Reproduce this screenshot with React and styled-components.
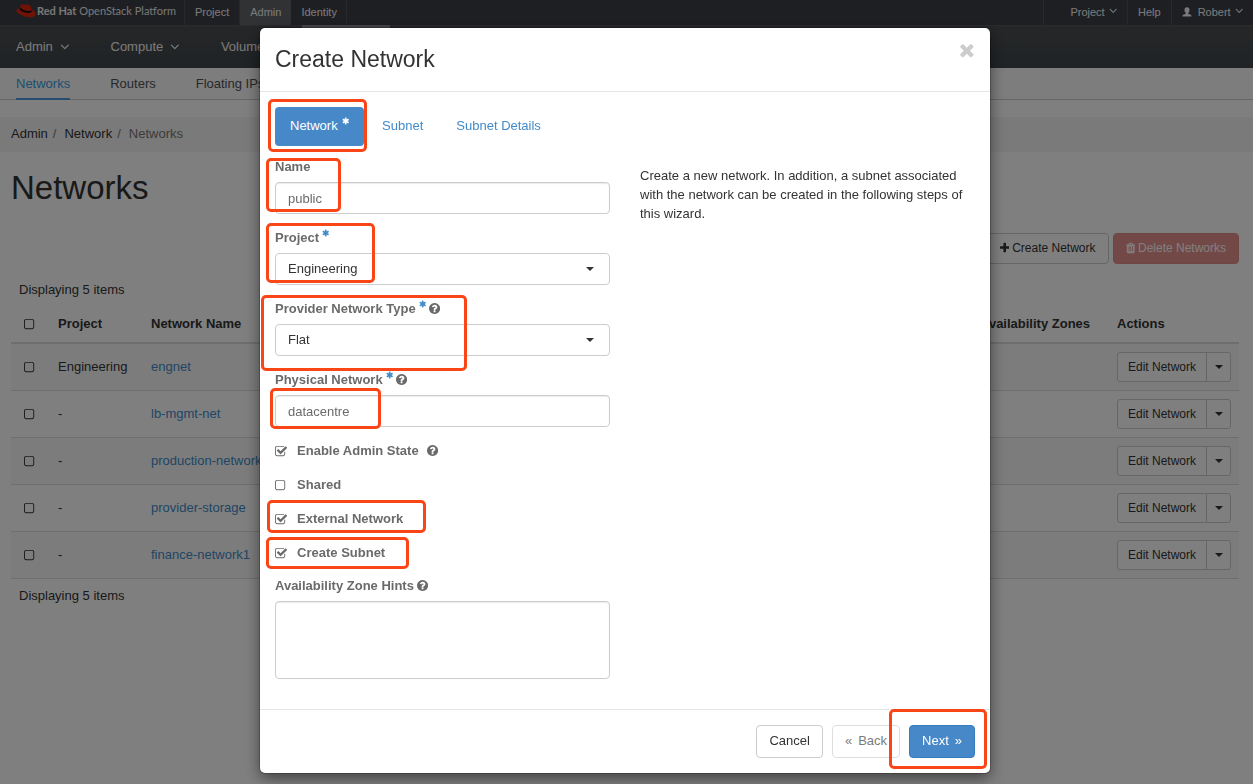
import React, { useState } from "react";
import styled, { createGlobalStyle, css } from "styled-components";

const GLYPHS = {
  check: {
    width: 1664,
    path: "M1408 606v-318q0 -119 -84.5 -203.5t-203.5 -84.5h-832q-119 0 -203.5 84.5t-84.5 203.5v832q0 119 84.5 203.5t203.5 84.5h832q63 0 117 -25q15 -7 18 -23q3 -17 -9 -29l-49 -49q-10 -10 -23 -10q-3 0 -9 2q-23 6 -45 6h-832q-66 0 -113 -47t-47 -113v-832q0 -66 47 -113t113 -47h832q66 0 113 47t47 113v254q0 13 9 22l64 64q10 10 23 10q6 0 12 -3q20 -8 20 -29zM1639 1095l-814 -814q-24 -24 -57 -24t-57 24l-430 430q-24 24 -24 57t24 57l110 110q24 24 57 24t57 -24l263 -263l647 647q24 24 57 24t57 -24l110 -110q24 -24 24 -57t-24 -57z",
  },
  square: {
    width: 1664,
    path: "M1120 1280h-832q-66 0 -113 -47t-47 -113v-832q0 -66 47 -113t113 -47h832q66 0 113 47t47 113v832q0 66 -47 113t-113 47zM1408 1120v-832q0 -119 -84.5 -203.5t-203.5 -84.5h-832q-119 0 -203.5 84.5t-84.5 203.5v832q0 119 84.5 203.5t203.5 84.5h832q119 0 203.5 -84.5t84.5 -203.5z",
  },
  help: {
    width: 1536,
    path: "M896 160v192q0 14 -9 23t-23 9h-192q-14 0 -23 -9t-9 -23v-192q0 -14 9 -23t23 -9h192q14 0 23 9t9 23zM1152 832q0 88 -55.5 163t-138.5 116t-170 41q-243 0 -371 -213q-15 -24 8 -42l132 -100q7 -6 19 -6q16 0 25 12q53 68 86 92q34 24 86 24q48 0 85.5 -26t37.5 -59q0 -38 -20 -61t-68 -45q-63 -28 -115.5 -86.5t-52.5 -125.5v-36q0 -14 9 -23t23 -9h192q14 0 23 9t9 23q0 19 21.5 49.5t54.5 49.5q32 18 49 28.5t46 35t44.5 48t28 60.5t12.5 81zM1536 640q0 -209 -103 -385.5t-279.5 -279.5t-385.5 -103t-385.5 103t-279.5 279.5t-103 385.5t103 385.5t279.5 279.5t385.5 103t385.5 -103t279.5 -279.5t103 -385.5z",
  },
  times: {
    width: 1408,
    path: "M1298 214q0 -40 -28 -68l-136 -136q-28 -28 -68 -28t-68 28l-294 294l-294 -294q-28 -28 -68 -28t-68 28l-136 136q-28 28 -28 68t28 68l294 294l-294 294q-28 28 -28 68t28 68l136 136q28 28 68 28t68 -28l294 -294l294 294q28 28 68 28t68 -28l136 -136q28 -28 28 -68t-28 -68l-294 -294l294 -294q28 -28 28 -68z",
  },
  asterisk: {
    width: 1664,
    path: "M1482 486q46 -26 59.5 -77.5t-12.5 -97.5l-64 -110q-26 -46 -77.5 -59.5t-97.5 12.5l-266 153v-307q0 -52 -38 -90t-90 -38h-128q-52 0 -90 38t-38 90v307l-266 -153q-46 -26 -97.5 -12.5t-77.5 59.5l-64 110q-26 46 -12.5 97.5t59.5 77.5l266 154l-266 154q-46 26 -59.5 77.5t12.5 97.5l64 110q26 46 77.5 59.5t97.5 -12.5l266 -153v307q0 52 38 90t90 38h128q52 0 90 -38t38 -90v-307l266 153q46 26 97.5 12.5t77.5 -59.5l64 -110q26 -46 12.5 -97.5t-59.5 -77.5l-266 -154z",
  },
  plus: {
    width: 1408,
    path: "M1408 800v-192q0 -40 -28 -68t-68 -28h-416v-416q0 -40 -28 -68t-68 -28h-192q-40 0 -68 28t-28 68v416h-416q-40 0 -68 28t-28 68v192q0 40 28 68t68 28h416v416q0 40 28 68t68 28h192q40 0 68 -28t28 -68v-416h416q40 0 68 -28t28 -68z",
  },
  trash: {
    width: 1408,
    path: "M512 160v704q0 14 -9 23t-23 9h-64q-14 0 -23 -9t-9 -23v-704q0 -14 9 -23t23 -9h64q14 0 23 9t9 23zM768 160v704q0 14 -9 23t-23 9h-64q-14 0 -23 -9t-9 -23v-704q0 -14 9 -23t23 -9h64q14 0 23 9t9 23zM1024 160v704q0 14 -9 23t-23 9h-64q-14 0 -23 -9t-9 -23v-704q0 -14 9 -23t23 -9h64q14 0 23 9t9 23zM480 1152h448l-48 117q-7 9 -17 11h-317q-10 -2 -17 -11zM1408 1120v-64q0 -14 -9 -23t-23 -9h-96v-948q0 -83 -47 -143.5t-113 -60.5h-832q-66 0 -113 58.5t-47 141.5v952h-96q-14 0 -23 9t-9 23v64q0 14 9 23t23 9h309l70 167q15 37 54 63t79 26h320q40 0 79 -26t54 -63l70 -167h309q14 0 23 -9t9 -23z",
  },
  angle: {
    width: 1152,
    path: "M1075 800q0 -13 -10 -23l-466 -466q-10 -10 -23 -10t-23 10l-466 466q-10 10 -10 23t10 23l50 50q10 10 23 10t23 -10l393 -393l393 393q10 10 23 10t23 -10l50 -50q10 -10 10 -23z",
  },
};

const Icon = ({ name, size = 13 }) => {
  const glyph = GLYPHS[name];
  return (
    <Glyph
      viewBox={`0 -1536 ${glyph.width} 1792`}
      width={(size * glyph.width) / 1792}
      height={size}
      $raised={name === "help" || name === "angle"}
      aria-hidden="true"
    >
      <path d={glyph.path} transform="scale(1 -1)" />
    </Glyph>
  );
};

const Caret = () => (
  <Glyph viewBox="0 0 8 4" width="8" height="4" aria-hidden="true">
    <path d="M0 0h8L4 4z" />
  </Glyph>
);

const Hat = () => (
  <Glyph viewBox="0 0 20 14" width="20" height="14" aria-hidden="true">
    <path
      fill="#e0260c"
      d="M4.6 1.6C5 .5 6.200 0 7.400.4c1 .3 1.700.5 2.500.2 1.300-.5 3.300-.1 4.100 1 .7 1 1.400 2.900 1.700 4.400 2.300.7 4 2.100 4 3.900 0 2.500-3 3.800-6.800 3.400C8 12.800.4 9.500.4 6.500.4 5 1.900 4.600 3.800 4.700z"
    />
    <path
      fill="#111"
      d="M3.800 4.700l.4-1.500c1.200 2.600 8.400 5.100 11.200 3.300l.3-.5.200 1.200c-.4 1.500-2.500 1.900-4.900 1.600C7.500 8.400 3.600 6.600 3.800 4.700z"
    />
  </Glyph>
);

const UserIcon = () => (
  <Glyph viewBox="0 0 10 10" width="10" height="10" aria-hidden="true">
    <path d="M5 .2c1.700 0 2.500 1.100 2.500 2.700 0 1.300-.6 2.300-1.200 2.900v1.100c1.600.3 3.200.7 3.200 1.900v.8h-9v-.8c0-1.200 1.600-1.600 3.200-1.900V5.800C3.100 5.200 2.500 4.200 2.500 2.900 2.500 1.300 3.300.2 5 .2z" />
  </Glyph>
);

const CheckBox = ({ label, children, defaultChecked = false }) => {
  const [checked, setChecked] = useState(defaultChecked);
  return (
    <CheckLabel>
      <HiddenCheck
        type="checkbox"
        aria-label={label}
        checked={checked}
        onChange={(e) => setChecked(e.target.checked)}
      />
      <Icon name={checked ? "check" : "square"} />
      {children && <span>{children}</span>}
    </CheckLabel>
  );
};

const Required = () => (
  <Star>
    <Icon name="asterisk" size={8} />
  </Star>
);

const FieldLabel = ({ htmlFor, required, help, children }) => (
  <LabelRow>
    <label htmlFor={htmlFor}>{children}</label>
    {required && <Required />}
    {help && <Icon name="help" />}
  </LabelRow>
);

const networks = [
  { project: "Engineering", name: "engnet" },
  { project: "-", name: "lb-mgmt-net" },
  { project: "-", name: "production-network" },
  { project: "-", name: "provider-storage" },
  { project: "-", name: "finance-network1" },
];

// highlight boxes, measured from the corner of the dialog
const highlights = [
  { x: 8, y: 71, w: 99, h: 53 },
  { x: 6, y: 130, w: 75, h: 54 },
  { x: 6, y: 195, w: 109, h: 60 },
  { x: 1, y: 267, w: 206, h: 76 },
  { x: 10, y: 360, w: 111, h: 41 },
  { x: 7, y: 472, w: 159, h: 33 },
  { x: 6, y: 509, w: 143, h: 32 },
  { x: 629, y: 681, w: 98, h: 60 },
];

const TopNav = () => (
  <TopBar>
    <Brand href="#">
      <Hat />
      <BrandText>
        <b>Red Hat</b> OpenStack Platform
      </BrandText>
    </Brand>
    <TopLink href="#">Project</TopLink>
    <TopLink href="#" $active>
      Admin
    </TopLink>
    <TopLink href="#" $end>
      Identity
      <Submenu />
    </TopLink>
    <Spacer />
    <TopLink href="#" $wide>
      Project <Icon name="angle" />
    </TopLink>
    <TopLink href="#">Help</TopLink>
    <TopLink href="#">
      <UserIcon />
      <UserName>Robert</UserName>
      <Icon name="angle" />
    </TopLink>
  </TopBar>
);

const NetworksPage = () => (
  <Page>
    <TopNav />
    <MainNav>
      <a href="#">
        Admin <Icon name="angle" size={15} />
      </a>
      <a href="#">
        Compute <Icon name="angle" size={15} />
      </a>
      <a href="#">
        Volume <Icon name="angle" size={15} />
      </a>
    </MainNav>
    <SubNav>
      <SubLink href="#" $active>
        Networks
      </SubLink>
      <SubLink href="#">Routers</SubLink>
      <SubLink href="#">Floating IPs</SubLink>
    </SubNav>
    <Breadcrumb>
      <a href="#">Admin</a>
      <i>/</i>
      <a href="#">Network</a>
      <i>/</i>
      <span>Networks</span>
    </Breadcrumb>
    <Content>
      <Heading>Networks</Heading>
      <Actions>
        <Button type="button" $small>
          <Icon name="plus" size={12} />
          Create Network
        </Button>
        <Button type="button" $small $kind="danger">
          <Icon name="trash" size={12} />
          Delete Networks
        </Button>
      </Actions>
      <Count>Displaying 5 items</Count>
      <Table>
        <colgroup>
          <CheckCol />
          <ProjectCol />
          <col />
          <ZoneCol />
          <ActionCol />
        </colgroup>
        <thead>
          <tr>
            <th>
              <CheckBox label="Select all networks" />
            </th>
            <th>Project</th>
            <th>Network Name</th>
            <th>Availability Zones</th>
            <th>Actions</th>
          </tr>
        </thead>
        <tbody>
          {networks.map((network) => (
            <tr key={network.name}>
              <td>
                <CheckBox label={`Select ${network.name}`} />
              </td>
              <td>{network.project}</td>
              <td>
                <a href="#">{network.name}</a>
              </td>
              <td />
              <td>
                <ButtonGroup>
                  <EditButton type="button">Edit Network</EditButton>
                  <MoreButton type="button" aria-label="More actions">
                    <Caret />
                  </MoreButton>
                </ButtonGroup>
              </td>
            </tr>
          ))}
        </tbody>
      </Table>
      <Count>Displaying 5 items</Count>
    </Content>
  </Page>
);

const CreateNetworkDialog = () => (
  <Dialog role="dialog" aria-labelledby="dialog-title">
    <DialogHeader>
      <DialogTitle id="dialog-title">Create Network</DialogTitle>
      <CloseButton type="button" aria-label="Close">
        <Icon name="times" size={20} />
      </CloseButton>
    </DialogHeader>
    <DialogBody>
      <Tabs>
        <Tab href="#" $active>
          Network <Required />
        </Tab>
        <Tab href="#">Subnet</Tab>
        <Tab href="#">Subnet Details</Tab>
      </Tabs>
      <Columns>
        <Form>
          <Field>
            <FieldLabel htmlFor="name">Name</FieldLabel>
            <Input id="name" type="text" defaultValue="public" />
          </Field>
          <Field>
            <FieldLabel htmlFor="project" required>
              Project
            </FieldLabel>
            <SelectBox>
              <Select id="project">
                <option>Engineering</option>
              </Select>
              <Caret />
            </SelectBox>
          </Field>
          <Field>
            <FieldLabel htmlFor="type" required help>
              Provider Network Type
            </FieldLabel>
            <SelectBox>
              <Select id="type">
                <option>Flat</option>
              </Select>
              <Caret />
            </SelectBox>
          </Field>
          <Field>
            <FieldLabel htmlFor="physical" required help>
              Physical Network
            </FieldLabel>
            <Input id="physical" type="text" defaultValue="datacentre" />
          </Field>
          <Checks>
            <CheckRow>
              <CheckBox defaultChecked>Enable Admin State</CheckBox>
              <Icon name="help" />
            </CheckRow>
            <CheckRow>
              <CheckBox>Shared</CheckBox>
            </CheckRow>
            <CheckRow>
              <CheckBox defaultChecked>External Network</CheckBox>
            </CheckRow>
            <CheckRow>
              <CheckBox defaultChecked>Create Subnet</CheckBox>
            </CheckRow>
          </Checks>
          <Field>
            <FieldLabel htmlFor="hints" help>
              Availability Zone Hints
            </FieldLabel>
            <TextArea id="hints" />
          </Field>
        </Form>
        <Help>
          Create a new network. In addition, a subnet associated with the network can be created in
          the following steps of this wizard.
        </Help>
      </Columns>
    </DialogBody>
    <DialogFooter>
      <Button type="button">Cancel</Button>
      <Button type="button" disabled>
        <span>«</span>Back
      </Button>
      <Button type="button" $kind="primary">
        Next<span>»</span>
      </Button>
    </DialogFooter>
    {highlights.map((box) => (
      <Highlight key={box.y} $box={box} />
    ))}
  </Dialog>
);

const App = () => (
  <>
    <GlobalStyle />
    <NetworksPage />
    <Backdrop>
      <CreateNetworkDialog />
    </Backdrop>
  </>
);

const GlobalStyle = createGlobalStyle`
  * {
    box-sizing: border-box;
  }

  body {
    margin: 0;
    background: #fff;
    color: #333;
    font: 13px/18px "Liberation Sans", Arial, sans-serif;
  }

  a {
    color: #428bca;
    text-decoration: none;
  }

  button, input, select, textarea {
    font: inherit;
  }
`;

const Glyph = styled.svg`
  display: block;
  flex: none;
  margin-bottom: ${(p) => (p.$raised ? 2 : 0)}px;
  fill: currentColor;
`;

const Page = styled.div`
  min-height: 100vh;
`;

const TopBar = styled.nav`
  display: flex;
  height: 26px;
  background: #3c3f45;
  border-bottom: 1px solid #55575a;
`;

const Brand = styled.a`
  display: flex;
  align-items: center;
  gap: 1px;
  width: 184px;
  padding: 0 0 3px 16px;
  color: #eee;
`;

const BrandText = styled.span`
  font-family: Lato, sans-serif;
  font-size: 11px;
  white-space: nowrap;
`;

const TopLink = styled.a`
  position: relative;
  display: flex;
  align-items: center;
  gap: 4px;
  padding: 0 ${(p) => (p.$end ? 9 : 10)}px 2px ${(p) => (p.$wide ? 26 : 10)}px;
  border-left: 1px solid #505257;
  color: #f5f5f5;
  font-size: 11px;

  ${(p) =>
    p.$active &&
    css`
      background: #626469;
    `}

  ${(p) =>
    p.$end &&
    css`
      border-left: 0;
      border-right: 1px solid #505257;
    `}
`;

const Submenu = styled.span`
  position: absolute;
  top: 25px;
  left: 11px;
  width: 88px;
  height: 40px;
  background: #8c8d90;
`;

const UserName = styled.span`
  margin-left: 2px;
`;

const Spacer = styled.div`
  flex: 1;
`;

const MainNav = styled.nav`
  display: flex;
  align-items: center;
  gap: 41px;
  height: 42px;
  padding: 0 16px;
  background: linear-gradient(#4c4e51, #3f474b);

  a {
    display: flex;
    align-items: center;
    gap: 7px;
    color: #f5f5f5;
  }
`;

const SubNav = styled.nav`
  display: flex;
  gap: 40px;
  height: 32px;
  padding: 0 16px;
  background: #fafafa;
  border-bottom: 1px solid #ccc;
`;

const SubLink = styled.a`
  height: 32px;
  padding-top: 7px;
  color: ${(p) => (p.$active ? "#39a0e0" : "#4d5258")};
  border-bottom: 2px solid ${(p) => (p.$active ? "#4c9ada" : "transparent")};
`;

const Breadcrumb = styled.nav`
  display: flex;
  align-items: center;
  height: 35px;
  margin-top: 17px;
  padding: 0 11px 2px;
  background: #f5f5f5;
  color: #777;

  a {
    color: #333;
  }

  i {
    padding: 0 8px 0 5px;
    font-style: normal;
  }
`;

const Content = styled.main`
  padding: 18px 14px 0 11px;
`;

const Heading = styled.h1`
  margin: 0 0 27px;
  font-size: 33px;
  font-weight: 400;
  line-height: 36px;
`;

const Actions = styled.div`
  display: flex;
  justify-content: flex-end;
  gap: 4px;
  margin-bottom: 9px;
`;

const Button = styled.button`
  display: flex;
  align-items: center;
  gap: ${(p) => (p.$small ? 3 : 6)}px;
  height: ${(p) => (p.$small ? 31 : 33)}px;
  padding: 0 12px 2px;
  border: 1px solid #ccc;
  border-radius: 4px;
  background: #fff;
  color: #333;
  font-size: ${(p) => (p.$small ? 12 : 13)}px;

  &:disabled {
    opacity: 0.65;
  }

  ${(p) =>
    p.$kind === "primary" &&
    css`
      background: #4788c8;
      border-color: #357ebd;
      color: #fff;
    `}

  ${(p) =>
    p.$kind === "danger" &&
    css`
      background: #e69290;
      border-color: #e08b88;
      color: #fff;
    `}
`;

const Count = styled.div`
  padding: 8px;
`;

const Table = styled.table`
  width: 100%;
  table-layout: fixed;
  border-collapse: separate;
  border-spacing: 0;

  th,
  td {
    padding: 0 8px;
    text-align: left;
    border-bottom: 1px solid #ddd;
  }

  th {
    padding: 8px 8px 9px;
    border-bottom-width: 2px;
  }

  td {
    height: 47px;
  }

  th:first-child,
  td:first-child {
    padding-left: 13px;
  }

  tbody tr:nth-child(odd) {
    background: #f9f9f9;
  }
`;

const CheckCol = styled.col`
  width: 39px;
`;

const ProjectCol = styled.col`
  width: 93px;
`;

const ZoneCol = styled.col`
  width: 137px;
`;

const ActionCol = styled.col`
  width: 130px;
`;

const ButtonGroup = styled.div`
  display: flex;
`;

const EditButton = styled.button`
  width: 90px;
  height: 30px;
  padding: 0;
  border: 1px solid #ccc;
  border-radius: 3px 0 0 3px;
  background: #fff;
  color: #333;
  font-size: 12px;
`;

const MoreButton = styled.button`
  display: flex;
  align-items: center;
  justify-content: center;
  width: 25px;
  height: 30px;
  margin-left: -1px;
  padding: 0;
  border: 1px solid #ccc;
  border-radius: 0 3px 3px 0;
  background: #fff;
  color: #333;
`;

const CheckLabel = styled.label`
  position: relative;
  display: flex;
  align-items: center;
  gap: 10px;
`;

const HiddenCheck = styled.input`
  position: absolute;
  width: 12px;
  height: 12px;
  margin: 0;
  opacity: 0;
`;

const Backdrop = styled.div`
  position: fixed;
  inset: 0;
  overflow: auto;
  padding: 28px 3px 11px 0;
  background: rgba(0, 0, 0, 0.5);
`;

const Dialog = styled.section`
  position: relative;
  width: 730px;
  max-width: 100%;
  margin: 0 auto;
  border-radius: 5px;
  background: #fff;
  box-shadow: 0 0 0 1px rgba(0, 0, 0, 0.2), 0 5px 15px rgba(0, 0, 0, 0.5);
`;

const DialogHeader = styled.header`
  display: flex;
  justify-content: space-between;
  padding: 15px;
  border-bottom: 1px solid #e5e5e5;
`;

const DialogTitle = styled.h2`
  margin: 0;
  font-size: 23px;
  font-weight: 400;
  line-height: 33px;
`;

const CloseButton = styled.button`
  display: flex;
  align-items: center;
  height: 14px;
  padding: 0;
  border: 0;
  background: none;
  color: #ccc;
`;

const DialogBody = styled.div`
  padding: 15px;
`;

const Tabs = styled.nav`
  display: flex;
  gap: 3px;
  margin-bottom: 12px;
`;

const Tab = styled.a`
  display: flex;
  align-items: center;
  height: 39px;
  padding: 0 15px 2px;
  border-radius: 4px;

  ${(p) =>
    p.$active &&
    css`
      background: #4788c8;
      color: #fff;

      span {
        color: #fff;
      }
    `}
`;

const Columns = styled.div`
  display: grid;
  grid-template-columns: 1fr 1fr;
  gap: 30px;
`;

const Form = styled.form`
  display: grid;
  gap: 15px;
  padding-bottom: 15px;
`;

const Field = styled.div`
  display: grid;
  gap: 6px;
`;

const LabelRow = styled.div`
  display: flex;
  align-items: center;
  gap: 3px;
  height: 18px;
  color: #6a6a6a;
  font-weight: 700;
`;

const Star = styled.span`
  height: 18px;
  color: #428bca;

  ${Tab} & {
    margin-left: 4px;
  }
`;

const control = css`
  width: 100%;
  border: 1px solid #ccc;
  border-radius: 4px;
  background: #fff;
`;

const Input = styled.input`
  ${control}
  height: 32px;
  padding: 1px 12px 0;
  color: #6a6a6a;
  box-shadow: inset 0 1px 1px rgba(0, 0, 0, 0.08);
`;

const SelectBox = styled.div`
  display: grid;
  align-items: center;

  > * {
    grid-area: 1 / 1;
  }

  svg {
    justify-self: end;
    margin-right: 16px;
    pointer-events: none;
  }
`;

const Select = styled.select`
  ${control}
  height: 32px;
  padding: 0 12px;
  appearance: none;
  color: #333;
`;

const TextArea = styled.textarea`
  ${control}
  display: block;
  height: 78px;
  resize: none;
  box-shadow: inset 0 1px 1px rgba(0, 0, 0, 0.08);
`;

const Checks = styled.div`
  display: grid;
  gap: 16px;
`;

const CheckRow = styled.div`
  display: flex;
  align-items: center;
  gap: 8px;
  height: 18px;
  color: #6a6a6a;
  font-weight: 700;
`;

const Help = styled.p`
  margin: 0;
  padding-top: 8px;
  line-height: 19px;
`;

const DialogFooter = styled.footer`
  display: flex;
  justify-content: flex-end;
  gap: 9px;
  padding: 15px;
  border-top: 1px solid #e5e5e5;
`;

const Highlight = styled.div`
  position: absolute;
  left: ${(p) => p.$box.x}px;
  top: ${(p) => p.$box.y}px;
  width: ${(p) => p.$box.w}px;
  height: ${(p) => p.$box.h}px;
  border: 3px solid #fa4616;
  border-radius: 5px;
  pointer-events: none;
`;

export default App;
